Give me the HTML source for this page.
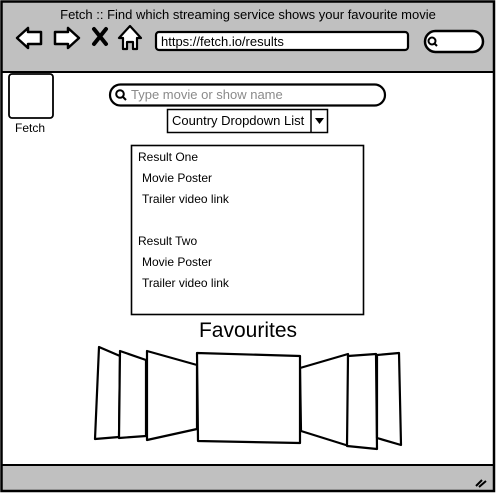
<!DOCTYPE html>
<html><head><meta charset="utf-8"><style>
html,body{margin:0;padding:0;background:#fff;width:496px;height:493px;overflow:hidden}
svg{display:block}
text{font-family:"Liberation Sans",sans-serif;fill:#000}
</style></head><body>
<svg width="496" height="493" viewBox="0 0 496 493" xmlns="http://www.w3.org/2000/svg">
<rect x="0" y="0" width="496" height="493" fill="#fff"/>
<!-- top bar -->
<rect x="2" y="2" width="492" height="70" fill="#c0c0c0"/>
<line x1="2" y1="72" x2="494" y2="72" stroke="#000" stroke-width="2"/>
<!-- bottom bar -->
<rect x="2" y="465" width="492" height="26" fill="#c0c0c0"/>
<line x1="2" y1="465" x2="494" y2="465" stroke="#000" stroke-width="2"/>
<!-- frame -->
<rect x="1.5" y="1.5" width="492.5" height="489.5" fill="none" stroke="#000" stroke-width="2.5"/>
<text x="248" y="19" font-size="13" text-anchor="middle">Fetch :: Find which streaming service shows your favourite movie</text>
<!-- nav icons -->
<path d="M17 38 L28 28 L28 32 L41 32 L41 44 L28 44 L28 48 Z" fill="#fff" stroke="#000" stroke-width="2.5" stroke-linejoin="round"/>
<path d="M79 38 L68 28 L68 32 L55 32 L55 44 L68 44 L68 48 Z" fill="#fff" stroke="#000" stroke-width="2.5" stroke-linejoin="round"/>
<path d="M94 29 L106 44 M106 29 L94 44" stroke="#000" stroke-width="4" stroke-linecap="round"/>
<path d="M130 26 L119 38 L123 38 L123 49 L127 49 L127 42 L133 42 L133 49 L137 49 L137 38 L141 38 Z" fill="#fff" stroke="#000" stroke-width="2.2" stroke-linejoin="round"/>
<!-- url -->
<rect x="156" y="32" width="252" height="18" rx="3" fill="#fff" stroke="#000" stroke-width="2.2"/>
<text x="161" y="46" font-size="13">https://fetch.io/results</text>
<rect x="425" y="31" width="58" height="21" rx="10.5" fill="#fff" stroke="#000" stroke-width="2.5"/>
<circle cx="432" cy="41" r="3.5" fill="none" stroke="#000" stroke-width="2"/>
<line x1="434.5" y1="43.5" x2="437" y2="46" stroke="#000" stroke-width="2"/>
<!-- resize mark -->
<path d="M476 486 L482 480 M479 487 L486 481" stroke="#000" stroke-width="2"/>
<!-- logo -->
<rect x="9" y="74" width="44" height="44" rx="3" fill="#fff" stroke="#000" stroke-width="1.8"/>
<text x="30" y="132" font-size="12" text-anchor="middle">Fetch</text>
<!-- search -->
<rect x="110" y="84.5" width="275" height="21" rx="10.5" fill="#fff" stroke="#000" stroke-width="2.2"/>
<circle cx="120" cy="94" r="3.8" fill="none" stroke="#000" stroke-width="2"/>
<line x1="123" y1="97" x2="126" y2="100" stroke="#000" stroke-width="2"/>
<text x="131" y="99" font-size="13" fill="#8a8a8a" style="fill:#8a8a8a">Type movie or show name</text>
<!-- dropdown -->
<rect x="167.5" y="109.5" width="160" height="23" fill="#fff" stroke="#000" stroke-width="1.5"/>
<line x1="311" y1="109.5" x2="311" y2="132.5" stroke="#000" stroke-width="1.5"/>
<path d="M315 118 L324 118 L319.5 124 Z" fill="#000"/>
<text x="172" y="125" font-size="13">Country Dropdown List</text>
<!-- results -->
<rect x="131.5" y="145.5" width="232" height="169" fill="#fff" stroke="#000" stroke-width="1.6"/>
<text x="138" y="161" font-size="12">Result One</text>
<text x="142" y="182" font-size="12">Movie Poster</text>
<text x="142" y="203" font-size="12">Trailer video link</text>
<text x="138" y="245" font-size="12">Result Two</text>
<text x="142" y="266" font-size="12">Movie Poster</text>
<text x="142" y="287" font-size="12">Trailer video link</text>
<!-- favourites -->
<text x="248" y="337" font-size="21" text-anchor="middle">Favourites</text>
<g fill="#fff" stroke="#000" stroke-width="2.2" stroke-linejoin="round">
<path d="M99 347 L120 356 L119 437 L95 439 Z"/>
<path d="M120 351 L146 360 L146 436 L119 438 Z"/>
<path d="M147 351 L197 365 L197 429 L147 440 Z"/>
<path d="M300 368 L348 354 L349 446 L301 431 Z"/>
<path d="M348 356 L376 354 L377 449 L347 446 Z"/>
<path d="M377 355 L399 353 L401 445 L377 438 Z"/>
<path d="M197 353 L300 356 L300 443 L198 441 Z"/>
</g>
</svg>
</body></html>
